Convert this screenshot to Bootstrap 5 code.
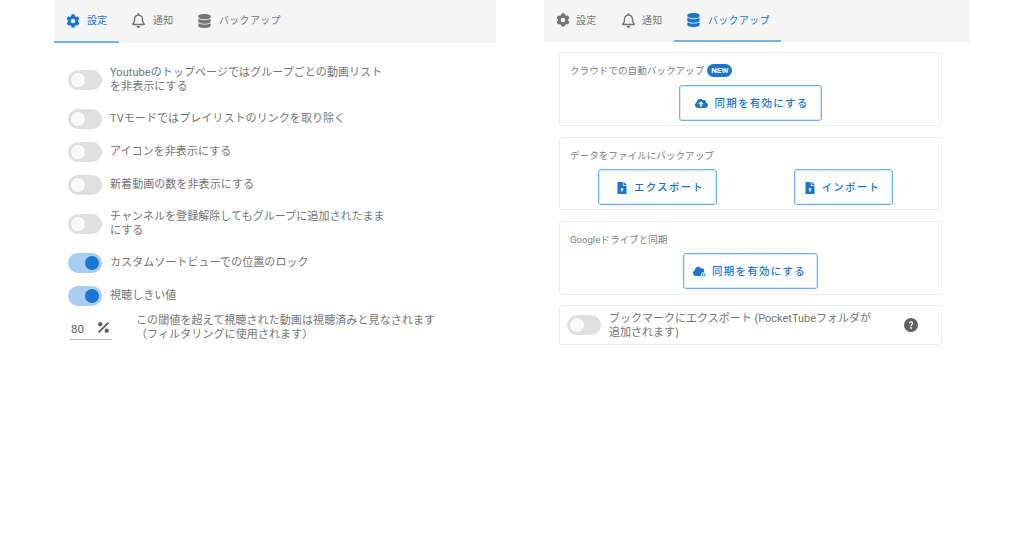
<!DOCTYPE html>
<html lang="ja">
<head>
<meta charset="utf-8">
<title>PocketTube</title>
<link rel="stylesheet" href="https://cdn.jsdelivr.net/npm/bootstrap@5.3.0/dist/css/bootstrap.min.css">
<style>
body{font-family:Roboto,"Noto Sans CJK JP",sans-serif;font-size:11px;color:#757575;background:#fff;height:538px;overflow:hidden}
.stage{padding-left:54px;gap:48px}
.pane-l{width:442px}
.pane-r{width:426px}
.tabbar{background:#f5f5f5}
.pane-l .tabbar{height:43px}
.pane-r .tabbar{height:42px}
.tabitem{height:100%;gap:8px;font-size:10px;color:#757575;letter-spacing:.3px;border-bottom:2px solid transparent}
.tabitem svg{fill:currentColor;flex:none}
.tabitem.on{color:#1976d2;border-bottom-color:#74b2ec}
.t1{width:65px;padding-left:12px;gap:7px}
.t2{width:65px;padding-left:13px}
.t3{padding-left:14px}
.pane-r .t1{width:65px;padding-left:12px;gap:6px}
.pane-r .t2{width:65px;padding-left:13px;gap:7px}
.pane-r .t3{width:107px;padding-left:13px}
.optlist{padding:23px 0 0 14px}
.opt{gap:8px;line-height:14px;color:#757575;letter-spacing:.07px}
.opt p{margin:0;width:282px}
.mt-a{margin-top:15px}
.mt-c{margin-top:13px}
.toggle{width:34px;height:20px;border-radius:10px;background:#e0e0e0;flex:none;padding:3px;display:flex;align-items:center}
.toggle i{display:block;width:14px;height:14px;border-radius:50%;background:#fafafa}
.toggle.on{background:#a9cdf0;justify-content:flex-end}
.toggle.on i{background:#1976d2}
.thresh{margin-top:8px;margin-left:2px}
.numbox{width:42px;height:24px;border-bottom:1px solid #bdbdbd;color:#616161;font-size:11.5px;padding:0 2px 1px 1px}
.numbox svg{fill:#616161}
.thresh p{margin:0 0 0 24px;line-height:14px;letter-spacing:.1px}
.blocks{margin:10px 0 0 15px;width:383px}
.panelbox{border:1px solid #eeeeee;border-radius:3px;padding:10px 10px 5px;height:74px}
.panelbox+.panelbox{margin-top:11px}
.panelbox.b2{height:73px}
.panelbox.b4{height:40px;margin-top:10px;padding:3px 7px;gap:8px;line-height:14px}
.panelbox h6{font-size:9.6px;font-weight:400;margin:0;line-height:16px;height:21px;color:#808080;display:flex;align-items:flex-start;gap:3px}
.panelbox h6.tall{height:22px}
.newtag{background:#1976d2;color:#fff;font-size:8px;font-weight:700;border-radius:7px;padding:0 4px;line-height:13px;height:13px;margin-top:1px}
.actbtn{border:1px solid #74b2ec;border-radius:3px;color:#1976d2;background:#fff;height:36px;font-size:10.5px;font-weight:500;letter-spacing:1.25px;gap:6px;padding:1px 0 0;box-shadow:inset 0 0 0 1px #d6e8fb}
.actbtn svg{fill:#1976d2;flex:none}
.w1{width:143px;padding-left:3px}
.w2{width:119px;padding-left:6px;gap:7px}
.w3{width:99px;padding-right:2px;gap:7px}
.w4{width:135px;padding-right:2px}
.pair{padding-left:28px;gap:77px}
.panelbox.b4 p{margin:2px 0 0;width:268px}
.helpdot{margin-left:auto;margin-right:16px;flex:none}
</style>
</head>
<body class="m-0">
<svg width="0" height="0" class="position-absolute">
<defs>
<symbol id="ic-gear" viewBox="0 0 512 512"><path d="M487 315l-42-25c4-23 4-46 0-69l42-25c5-3 7-8 5-14-11-35-30-67-54-93-4-4-9-5-14-2l-42 24c-18-15-38-27-60-35V28c0-5-4-10-9-11-36-8-74-8-109 0-6 1-9 6-9 11v49c-22 8-42 20-60 35L93 88c-5-3-10-2-14 2-24 26-43 58-54 93-2 6 0 11 5 14l42 25c-4 23-4 46 0 69l-42 25c-5 3-7 8-5 14 11 35 30 67 54 93 4 4 9 5 14 2l42-24c18 15 38 27 60 35v49c0 5 4 10 9 11 36 8 74 8 109 0 6-1 9-6 9-11v-49c22-8 42-20 60-35l42 24c5 3 10 2 14-2 24-26 43-58 54-93 2-6 0-11-5-14zM256 336a80 80 0 1 1 0-160 80 80 0 0 1 0 160z"/></symbol>
<symbol id="ic-bell" viewBox="0 0 448 512"><path d="M224 512c35 0 64-29 64-64H160c0 35 29 64 64 64zm215-150c-19-21-55-52-55-154 0-78-54-140-128-155V32a32 32 0 1 0-64 0v21C118 68 64 130 64 208c0 102-36 133-55 154-6 6-9 13-9 22 0 16 13 32 32 32h384c19 0 32-16 32-32 0-9-3-16-9-22zM67 368c21-28 45-74 45-160 0-62 50-112 112-112s112 50 112 112c0 86 24 132 45 160H67z"/></symbol>
<symbol id="ic-db" viewBox="0 0 448 512"><path d="M448 73v46c0 40-100 73-224 73S0 159 0 119V73C0 33 100 0 224 0s224 33 224 73zm0 103v103c0 40-100 73-224 73S0 319 0 279V176c48 33 136 49 224 49s176-16 224-49zm0 160v103c0 40-100 73-224 73S0 479 0 439V336c48 33 136 49 224 49s176-16 224-49z"/></symbol>
<symbol id="ic-cloud" viewBox="0 0 640 512"><path d="M537 222c4-10 7-22 7-34 0-53-43-96-96-96-20 0-38 6-53 16C367 60 315 28 256 28c-88 0-160 72-160 160v8C40 216 0 270 0 332c0 80 64 144 144 144h368c71 0 128-57 128-128 0-62-44-114-103-126zM393 295h-65v113c0 9-7 16-16 16h-48c-9 0-16-7-16-16V295h-65c-14 0-21-17-11-27l105-105c6-6 16-6 22 0l105 105c10 10 3 27-11 27z" transform="translate(0 -4)"/></symbol>
<symbol id="ic-file" viewBox="0 0 384 512"><path d="M224 136V0H24C11 0 0 11 0 24v464c0 13 11 24 24 24h336c13 0 24-11 24-24V160H248c-13 0-24-11-24-24zm160-14v6H256V0h6c6 0 12 3 17 7l98 98c4 5 7 11 7 17zM192 240l84 84h-56v84h-56v-84h-56z"/></symbol>
<symbol id="ic-gcloud" viewBox="0 0 640 512"><path d="M537 222c4-10 7-22 7-34 0-53-43-96-96-96-20 0-38 6-53 16C367 60 315 28 256 28c-88 0-160 72-160 160v8C40 216 0 270 0 332c0 80 64 144 144 144h250c-6-16-10-32-10-50 0-75 61-136 136-136 28 0 50 6 17-68z"/><path d="M530 330a85 85 0 1 0 0 170 85 85 0 0 0 0-170zm0 130a45 45 0 1 1 0-90 45 45 0 0 1 0 90z"/></symbol>
</defs>
</svg>

<div class="stage d-flex align-items-start">
  <section class="pane-l">
    <nav class="tabbar d-flex align-items-stretch">
      <div class="tabitem on t1 d-flex align-items-center"><svg width="14" height="14"><use href="#ic-gear"/></svg>設定</div>
      <div class="tabitem t2 d-flex align-items-center"><svg width="13" height="15"><use href="#ic-bell"/></svg>通知</div>
      <div class="tabitem t3 d-flex align-items-center"><svg width="13" height="14"><use href="#ic-db"/></svg>バックアップ</div>
    </nav>
    <div class="optlist">
      <div class="opt d-flex align-items-center"><span class="toggle"><i></i></span><p>Youtubeのトップページではグループごとの動画リストを非表示にする</p></div>
      <div class="opt d-flex align-items-center mt-a"><span class="toggle"><i></i></span><p>TVモードではプレイリストのリンクを取り除く</p></div>
      <div class="opt d-flex align-items-center mt-c"><span class="toggle"><i></i></span><p>アイコンを非表示にする</p></div>
      <div class="opt d-flex align-items-center mt-c"><span class="toggle"><i></i></span><p>新着動画の数を非表示にする</p></div>
      <div class="opt d-flex align-items-center mt-a"><span class="toggle"><i></i></span><p>チャンネルを登録解除してもグループに追加されたままにする</p></div>
      <div class="opt d-flex align-items-center mt-a"><span class="toggle on"><i></i></span><p>カスタムソートビューでの位置のロック</p></div>
      <div class="opt d-flex align-items-center mt-c"><span class="toggle on"><i></i></span><p>視聴しきい値</p></div>
      <div class="thresh d-flex align-items-center">
        <div class="numbox d-flex align-items-end justify-content-between"><span>80</span><svg width="13" height="13" viewBox="0 0 14 14" class="mb-1"><path d="M11.6 1 13 2.4 2.4 13 1 11.6z"/><circle cx="3.5" cy="3.5" r="2.3"/><circle cx="10.5" cy="10.5" r="2.3"/></svg></div>
        <p>この閾値を超えて視聴された動画は視聴済みと見なされます<br>（フィルタリングに使用されます）</p>
      </div>
    </div>
  </section>

  <section class="pane-r">
    <nav class="tabbar d-flex align-items-stretch">
      <div class="tabitem t1 d-flex align-items-center"><svg width="14" height="14"><use href="#ic-gear"/></svg>設定</div>
      <div class="tabitem t2 d-flex align-items-center"><svg width="13" height="15"><use href="#ic-bell"/></svg>通知</div>
      <div class="tabitem on t3 d-flex align-items-center"><svg width="13" height="14"><use href="#ic-db"/></svg>バックアップ</div>
    </nav>
    <div class="blocks">
      <div class="panelbox">
        <h6 class="tall">クラウドでの自動バックアップ <span class="newtag">NEW</span></h6>
        <div class="d-flex justify-content-center"><button type="button" class="actbtn w1 d-flex align-items-center justify-content-center"><svg width="13" height="11"><use href="#ic-cloud"/></svg>同期を有効にする</button></div>
      </div>
      <div class="panelbox b2">
        <h6>データをファイルにバックアップ</h6>
        <div class="pair d-flex"><button type="button" class="actbtn w2 d-flex align-items-center justify-content-center"><svg width="10" height="12"><use href="#ic-file"/></svg>エクスポート</button><button type="button" class="actbtn w3 d-flex align-items-center justify-content-center"><svg width="10" height="12"><use href="#ic-file"/></svg>インポート</button></div>
      </div>
      <div class="panelbox">
        <h6>Googleドライブと同期</h6>
        <div class="d-flex justify-content-center"><button type="button" class="actbtn w4 d-flex align-items-center justify-content-center"><svg width="13" height="11"><use href="#ic-gcloud"/></svg>同期を有効にする</button></div>
      </div>
      <div class="panelbox b4 d-flex align-items-center">
        <span class="toggle"><i></i></span>
        <p>ブックマークにエクスポート (PocketTubeフォルダが追加されます)</p>
        <svg class="helpdot" width="14" height="14" viewBox="0 0 14 14"><circle cx="7" cy="7" r="7" fill="#616161"/><path d="M4.9 5.3C5 4 5.9 3.3 7.1 3.3c1.2 0 2.1.8 2.1 1.9 0 1.7-1.6 1.6-1.6 3.1H6.3c0-2 1.6-2 1.6-3.1 0-.5-.4-.8-.9-.8-.5 0-.8.3-.9.9z" fill="#fff"/><circle cx="7" cy="10" r=".9" fill="#fff"/></svg>
      </div>
    </div>
  </section>
</div>
<script src="https://cdn.jsdelivr.net/npm/bootstrap@5.3.0/dist/js/bootstrap.bundle.min.js"></script>
</body>
</html>
